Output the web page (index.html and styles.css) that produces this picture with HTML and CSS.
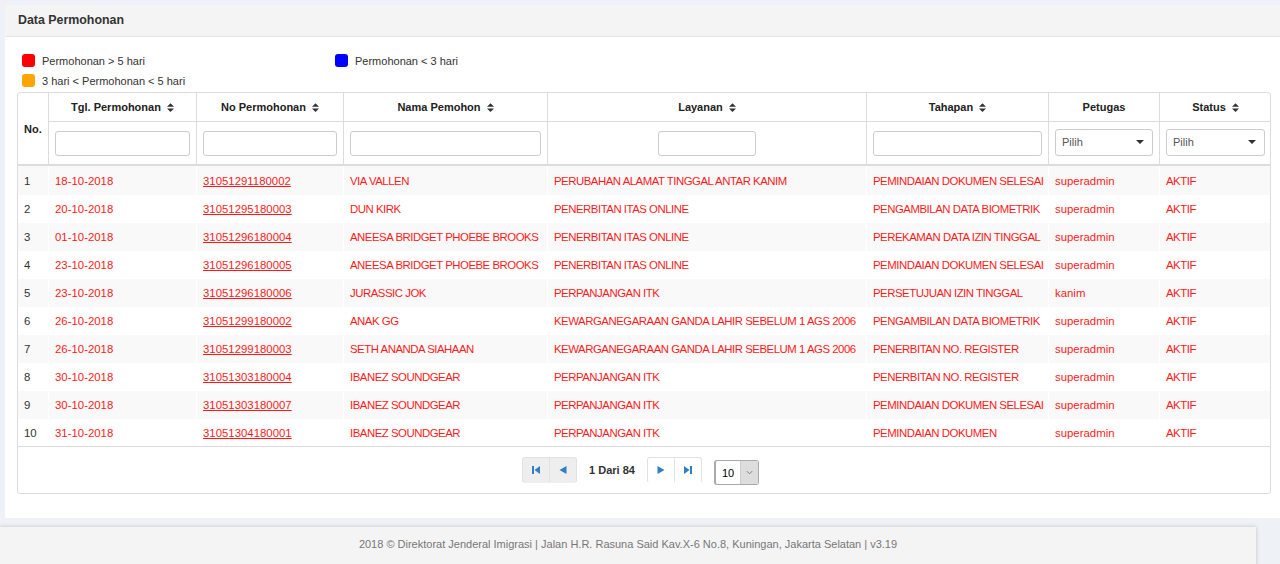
FILE: index.html
```html
<!DOCTYPE html>
<html>
<head>
<meta charset="utf-8">
<link rel="stylesheet" href="styles.css">
</head>
<body>
<div class="box">
  <div class="box-head">Data Permohonan</div>
  <div class="box-body">
    <div class="legend">
      <div class="leg"><span class="sq red"></span>Permohonan &gt; 5 hari</div>
      <div class="leg"><span class="sq blue"></span>Permohonan &lt; 3 hari</div>
      <div class="leg"><span class="sq orange"></span>3 hari &lt; Permohonan &lt; 5 hari</div>
    </div>
    <div class="panel">
      <table class="grid">
        <colgroup>
          <col style="width:31px"><col style="width:148px"><col style="width:147px"><col style="width:204px"><col style="width:319px"><col style="width:182px"><col style="width:111px"><col style="width:112px">
        </colgroup>
        <thead>
          <tr class="h1">
            <th rowspan="2" class="no">No.</th>
            <th>Tgl. Permohonan <svg class="sort" viewBox="0 0 8 10"><path d="M0 4h8L4 0zM0 6h8L4 10z"/></svg></th>
            <th>No Permohonan <svg class="sort" viewBox="0 0 8 10"><path d="M0 4h8L4 0zM0 6h8L4 10z"/></svg></th>
            <th>Nama Pemohon <svg class="sort" viewBox="0 0 8 10"><path d="M0 4h8L4 0zM0 6h8L4 10z"/></svg></th>
            <th>Layanan <svg class="sort" viewBox="0 0 8 10"><path d="M0 4h8L4 0zM0 6h8L4 10z"/></svg></th>
            <th>Tahapan <svg class="sort" viewBox="0 0 8 10"><path d="M0 4h8L4 0zM0 6h8L4 10z"/></svg></th>
            <th>Petugas</th>
            <th>Status <svg class="sort" viewBox="0 0 8 10"><path d="M0 4h8L4 0zM0 6h8L4 10z"/></svg></th>
          </tr>
          <tr class="h2">
            <th><div class="inp"></div></th>
            <th><div class="inp"></div></th>
            <th><div class="inp"></div></th>
            <th><div class="inp small"></div></th>
            <th><div class="inp"></div></th>
            <th><div class="sel">Pilih<span class="caret"></span></div></th>
            <th><div class="sel">Pilih<span class="caret"></span></div></th>
          </tr>
        </thead>
        <tbody>
          <tr><td class="n">1</td><td>18-10-2018</td><td><a>31051291180002</a></td><td class="t">VIA VALLEN</td><td class="t">PERUBAHAN ALAMAT TINGGAL ANTAR KANIM</td><td class="t">PEMINDAIAN DOKUMEN SELESAI</td><td>superadmin</td><td class="t">AKTIF</td></tr>
          <tr><td class="n">2</td><td>20-10-2018</td><td><a>31051295180003</a></td><td class="t">DUN KIRK</td><td class="t">PENERBITAN ITAS ONLINE</td><td class="t">PENGAMBILAN DATA BIOMETRIK</td><td>superadmin</td><td class="t">AKTIF</td></tr>
          <tr><td class="n">3</td><td>01-10-2018</td><td><a>31051296180004</a></td><td class="t">ANEESA BRIDGET PHOEBE BROOKS</td><td class="t">PENERBITAN ITAS ONLINE</td><td class="t">PEREKAMAN DATA IZIN TINGGAL</td><td>superadmin</td><td class="t">AKTIF</td></tr>
          <tr><td class="n">4</td><td>23-10-2018</td><td><a>31051296180005</a></td><td class="t">ANEESA BRIDGET PHOEBE BROOKS</td><td class="t">PENERBITAN ITAS ONLINE</td><td class="t">PEMINDAIAN DOKUMEN SELESAI</td><td>superadmin</td><td class="t">AKTIF</td></tr>
          <tr><td class="n">5</td><td>23-10-2018</td><td><a>31051296180006</a></td><td class="t">JURASSIC JOK</td><td class="t">PERPANJANGAN ITK</td><td class="t">PERSETUJUAN IZIN TINGGAL</td><td>kanim</td><td class="t">AKTIF</td></tr>
          <tr><td class="n">6</td><td>26-10-2018</td><td><a>31051299180002</a></td><td class="t">ANAK GG</td><td class="t">KEWARGANEGARAAN GANDA LAHIR SEBELUM 1 AGS 2006</td><td class="t">PENGAMBILAN DATA BIOMETRIK</td><td>superadmin</td><td class="t">AKTIF</td></tr>
          <tr><td class="n">7</td><td>26-10-2018</td><td><a>31051299180003</a></td><td class="t">SETH ANANDA SIAHAAN</td><td class="t">KEWARGANEGARAAN GANDA LAHIR SEBELUM 1 AGS 2006</td><td class="t">PENERBITAN NO. REGISTER</td><td>superadmin</td><td class="t">AKTIF</td></tr>
          <tr><td class="n">8</td><td>30-10-2018</td><td><a>31051303180004</a></td><td class="t">IBANEZ SOUNDGEAR</td><td class="t">PERPANJANGAN ITK</td><td class="t">PENERBITAN NO. REGISTER</td><td>superadmin</td><td class="t">AKTIF</td></tr>
          <tr><td class="n">9</td><td>30-10-2018</td><td><a>31051303180007</a></td><td class="t">IBANEZ SOUNDGEAR</td><td class="t">PERPANJANGAN ITK</td><td class="t">PEMINDAIAN DOKUMEN SELESAI</td><td>superadmin</td><td class="t">AKTIF</td></tr>
          <tr><td class="n">10</td><td>31-10-2018</td><td><a>31051304180001</a></td><td class="t">IBANEZ SOUNDGEAR</td><td class="t">PERPANJANGAN ITK</td><td class="t">PEMINDAIAN DOKUMEN</td><td>superadmin</td><td class="t">AKTIF</td></tr>
        </tbody>
      </table>
      <div class="pager">
        <div class="btns dis">
          <span class="pb"><svg viewBox="0 0 10 10"><rect x="1" y="1" width="2" height="8"/><path d="M9 1v8L3.5 5z"/></svg></span>
          <span class="pb"><svg viewBox="0 0 10 10"><path d="M8.5 1v8L1.5 5z"/></svg></span>
        </div>
        <div class="pinfo">1 Dari 84</div>
        <div class="btns">
          <span class="pb"><svg viewBox="0 0 10 10"><path d="M1.5 1v8L8.5 5z"/></svg></span>
          <span class="pb"><svg viewBox="0 0 10 10"><path d="M1 1v8L6.5 5z"/><rect x="7" y="1" width="2" height="8"/></svg></span>
        </div>
        <div class="psize"><span class="pv">10</span><span class="pd"><svg viewBox="0 0 10 10"><path d="M2 3.5l3 3 3-3" fill="none" stroke="#777" stroke-width="1"/></svg></span></div>
      </div>
    </div>
  </div>
</div>
<div class="footer">2018 © Direktorat Jenderal Imigrasi | Jalan H.R. Rasuna Said Kav.X-6 No.8, Kuningan, Jakarta Selatan | v3.19</div>
</body>
</html>
```
FILE: styles.css
```css
html, body { margin: 0; padding: 0; }
body {
  background: #eef1f5;
  font-family: "Liberation Sans", Arial, sans-serif;
  color: #333;
  font-size: 11.4px;
  padding-top: 5px;
  overflow: hidden;
  height: 564px;
}
.box {
  margin-left: 5px;
  width: 1275px;
  background: #fff;
  height: 513px;
  box-sizing: border-box;
}
.box-head {
  height: 32px;
  box-sizing: border-box;
  background: #f4f4f4;
  border-bottom: 1px solid #e6e6e6;
  font-weight: bold;
  font-size: 12.4px;
  padding-left: 13px;
  line-height: 31px;
}
.box-body { padding: 17px 4px 0 12px; }
.legend {
  display: grid;
  grid-template-columns: 313px 300px;
  row-gap: 7px;
  padding-left: 5px;
  margin-bottom: 5px;
}
.leg {
  display: flex;
  align-items: center;
  height: 13px;
  font-size: 11px;
  gap: 7px;
}
.sq { width: 13px; height: 13px; border-radius: 3px; display: inline-block; }
.red { background: #ff0000; }
.blue { background: #0000ff; }
.orange { background: #ffa500; }
.panel {
  border: 1px solid #dcdcdc;
  border-radius: 3px;
  width: 1254px;
  box-sizing: border-box;
  overflow: hidden;
}
.grid {
  border-collapse: collapse;
  table-layout: fixed;
  width: 1254px;
  margin: -1px;
}
.grid th {
  font-weight: bold;
  font-size: 11px;
  text-align: center;
  border: 1px solid #ddd;
  padding: 0 6px;
  color: #222;
}
.grid .h1 th { height: 28px; }
.grid .h2 th { height: 42px; border-bottom: 2px solid #ddd; }
.grid th.no { text-align: left; border-bottom: 2px solid #ddd; }
.sort { width: 7px; height: 9px; fill: #333; vertical-align: -1px; margin-left: 3px; }
.inp {
  height: 25px;
  border: 1px solid #ccc;
  border-radius: 3px;
  box-sizing: border-box;
  background: #fff;
}
.inp.small { width: 98px; margin: 0 auto; }
.sel {
  height: 27px;
  border: 1px solid #ccc;
  border-radius: 3px;
  box-sizing: border-box;
  display: flex;
  align-items: center;
  justify-content: space-between;
  padding: 0 8px 0 6px;
  font-weight: normal;
  color: #555;
  font-size: 11px;
  margin-top: -2px;
}
.caret {
  width: 0; height: 0;
  border-left: 4px solid transparent;
  border-right: 4px solid transparent;
  border-top: 4px solid #333;
}
.grid td {
  height: 28px;
  padding: 0 6px;
  color: #ff1a1a;
  white-space: nowrap;
  overflow: hidden;
  border-left: 1px solid transparent;
}
.grid td.t { letter-spacing: -0.48px; }
.grid td.n { color: #333; }
.grid td a { color: #ff1a1a; text-decoration: underline; }
.grid tbody tr:nth-child(odd) td { background: #f9f9f9; }
.grid tbody tr:first-child td { height: 29px; }
.pager {
  border-top: 1px solid #ddd;
  height: 47px;
  display: flex;
  align-items: flex-start;
  justify-content: center;
  padding: 10px 7px 0 0;
  box-sizing: border-box;
}
.btns { display: flex; border: 1px solid #e2e2e2; border-radius: 3px; height: 26px; box-sizing: border-box; border-bottom-color: transparent; }
.btns.dis { background: #eee; }
.pb { width: 26px; display: flex; align-items: center; justify-content: center; border-left: 1px solid #e2e2e2; }
.pb:first-child { border-left: none; }
.pb svg { width: 10px; height: 10px; fill: #2f7fc6; }
.pinfo { font-weight: bold; font-size: 11px; padding: 0 12px; line-height: 27px; }
.psize {
  display: flex;
  margin-left: 12px;
  height: 25px;
  width: 45px;
  border: 1px solid #aaa;
  border-left-width: 2px;
  border-radius: 3px;
  box-sizing: border-box;
  margin-top: 3px;
}
.pv { flex: 1; display: flex; align-items: center; padding-left: 6px; font-size: 11px; color: #000; }
.pd { width: 17px; background: #ddd; display: flex; align-items: center; justify-content: center; border-left: 1px solid #ccc; }
.pd svg { width: 9px; height: 9px; }
.footer {
  margin-top: 9px;
  width: 1256px;
  height: 45px;
  background: #f4f4f4;
  box-shadow: 0 0 4px rgba(0,0,0,0.2);
  color: #777;
  font-size: 11px;
  text-align: center;
  line-height: 35px;
  letter-spacing: 0;
}
```
